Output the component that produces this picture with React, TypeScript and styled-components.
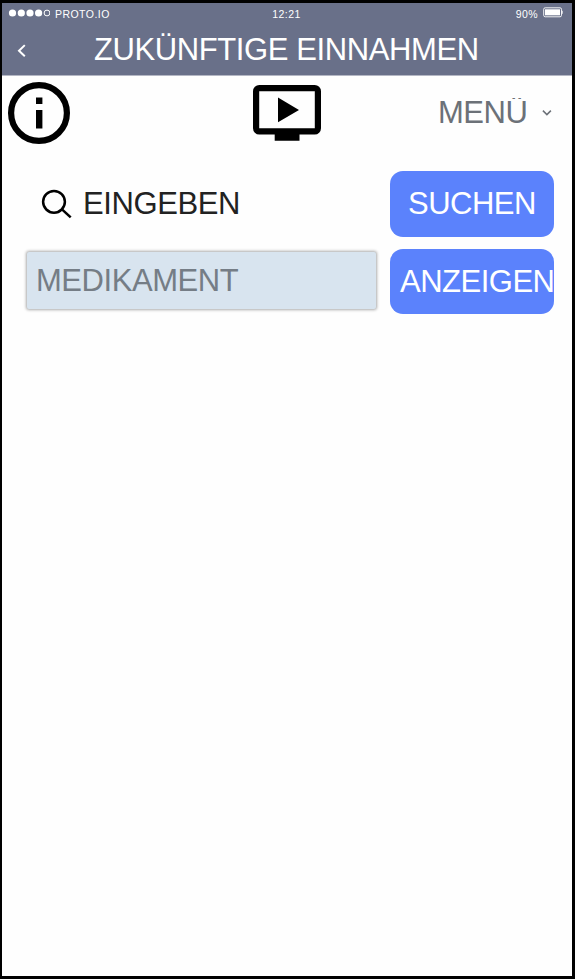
import React from "react";
import styled, { createGlobalStyle } from "styled-components";

const GlobalStyle = createGlobalStyle`
  *, *::before, *::after { box-sizing: border-box; }
  body { margin: 0; background: #fdfdfd; font-family: "Liberation Sans", Arial, sans-serif; }
  svg { display: block; flex: none; }
`;

const Device = styled.main`
  width: 575px;
  height: 979px;
  border: solid #000;
  border-width: 3px 3px 3px 2px;
  background: #fefefe;
  overflow: hidden;
`;

const Header = styled.header`
  height: 73px;
  background: #697089;
  border-bottom: 1px solid #b4b7c4;
  color: #fff;
`;

const StatusBar = styled.div`
  display: grid;
  grid-template-columns: 1fr auto 1fr;
  height: 21px;
  padding: 0 9px 0 6px;
  font: 10.5px/22px "Liberation Sans", Arial, sans-serif;
  letter-spacing: 0.45px;
`;

const StatusGroup = styled.div<{ $end?: boolean }>`
  display: flex;
  gap: 5px;
  justify-content: ${(p) => (p.$end ? "flex-end" : "flex-start")};
  svg { margin-top: ${(p) => (p.$end ? "4px" : "6px")}; }
`;

const Clock = styled.span`
  padding-left: 2px;
`;

const TitleBar = styled.div`
  display: grid;
  grid-template-columns: 92px 1fr;
  height: 51px;
`;

const BackButton = styled.button`
  display: flex;
  align-items: flex-start;
  padding: 20px 0 0 15px;
  border: 0;
  background: none;
  color: inherit;
`;

const Title = styled.h1`
  margin: 0;
  font-size: 31px;
  font-weight: 400;
  line-height: 51px;
  letter-spacing: -0.4px;
  white-space: nowrap;
`;

const Toolbar = styled.nav`
  display: grid;
  grid-template-columns: 251px 185px 1fr;
  height: 92px;
`;

const IconSlot = styled.div<{ $left: number; $top: number }>`
  padding: ${(p) => p.$top}px 0 0 ${(p) => p.$left}px;
`;

const MenuSelect = styled.div`
  display: flex;
  align-items: flex-start;
  gap: 15px;
  color: #6c7178;
  svg { margin-top: 33px; }
`;

const MenuLabel = styled.span`
  height: 30px;
  margin-top: 22px;
  font-size: 31px;
  line-height: 30px;
  letter-spacing: -0.5px;
  overflow: hidden;
`;

const SearchForm = styled.section`
  display: grid;
  grid-template-columns: 351px 164px;
  column-gap: 13px;
  row-gap: 12px;
  padding: 3px 0 0 24px;
`;

const SearchLabel = styled.label`
  display: flex;
  align-items: flex-start;
  gap: 11px;
  padding-left: 15px;
  color: #222;
  font-size: 31px;
  line-height: 65px;
  letter-spacing: -0.4px;
  svg { margin-top: 18px; }
`;

const Field = styled.input`
  width: 349px;
  height: 57px;
  margin: 3px 0 0 1px;
  padding: 0 9px;
  border: 0;
  border-radius: 2px;
  background: #d8e4ef;
  box-shadow: 0 0 3px 1px rgba(0, 0, 0, 0.33);
  font: 31px "Liberation Sans", Arial, sans-serif;
  letter-spacing: -0.45px;
  outline: none;
  &::placeholder { color: #757d86; opacity: 1; }
`;

const Action = styled.button<{ $height: number; $inset: number }>`
  width: 164px;
  height: ${(p) => p.$height}px;
  padding: 0 0 ${(p) => p.$height - 65}px ${(p) => p.$inset}px;
  border: 0;
  border-radius: 13px;
  background: #5b82fc;
  color: #fff;
  font: 31px/65px "Liberation Sans", Arial, sans-serif;
  letter-spacing: -0.5px;
  text-align: left;
  white-space: nowrap;
`;

const SignalIcon = () => (
  <svg width="42" height="8" viewBox="0 0 42 8" fill="#fff">
    {[4.5, 13.3, 22, 30.6].map((x) => (
      <circle key={x} cx={x} cy="4" r="3.6" />
    ))}
    <circle cx="39" cy="4" r="2.9" fill="none" stroke="#fff" strokeWidth="1" />
  </svg>
);

const BatteryIcon = () => (
  <svg width="20" height="11" viewBox="0 0 20 11">
    <rect x="0.7" y="0.8" width="17.8" height="9" rx="1.5" fill="none" stroke="#fff" strokeWidth="0.9" />
    <rect x="2" y="2.3" width="15" height="6" fill="#fff" />
    <path d="M19.3 3.8v3" stroke="#fff" strokeWidth="0.8" />
  </svg>
);

const BackIcon = () => (
  <svg width="10" height="14" viewBox="0 0 10 14" fill="none" stroke="#fff" strokeWidth="2">
    <path d="M7.8 1.1 2 6.7l5.8 5.6" />
  </svg>
);

const InfoIcon = () => (
  <svg width="64" height="64" viewBox="0 0 64 64">
    <circle cx="32" cy="32" r="27.9" fill="none" stroke="#000" strokeWidth="6.2" />
    <path d="M29 16.5h6.4v6.4H29zM29 29h6.4v18.5H29z" />
  </svg>
);

const VideoIcon = () => (
  <svg width="68" height="56" viewBox="0 0 68 56">
    <rect x="3.1" y="3.1" width="61.8" height="43.3" rx="3.2" fill="none" stroke="#000" strokeWidth="6.2" />
    <path d="M21.7 48h24.8v7.7H21.7zM25 12.6v24.6l21-12.3z" />
  </svg>
);

const ChevronIcon = () => (
  <svg width="10" height="8" viewBox="0 0 10 8" fill="none" stroke="#6c7178" strokeWidth="1.5">
    <path d="m.9 1.6 4 4 4-4" />
  </svg>
);

const SearchIcon = () => (
  <svg width="31" height="31" viewBox="0 0 31 31" fill="none" stroke="#000" strokeWidth="2.5">
    <circle cx="13" cy="12.8" r="10.9" />
    <path d="m20.7 20.1 9 8.3" />
  </svg>
);

export default function App() {
  return (
    <>
      <GlobalStyle />
      <Device>
        <Header>
          <StatusBar>
            <StatusGroup><SignalIcon /><span>PROTO.IO</span></StatusGroup>
            <Clock>12:21</Clock>
            <StatusGroup $end><span>90%</span><BatteryIcon /></StatusGroup>
          </StatusBar>
          <TitleBar>
            <BackButton aria-label="Zurück"><BackIcon /></BackButton>
            <Title>ZUKÜNFTIGE EINNAHMEN</Title>
          </TitleBar>
        </Header>
        <Toolbar>
          <IconSlot $left={5} $top={5}><InfoIcon /></IconSlot>
          <IconSlot $left={0} $top={9}><VideoIcon /></IconSlot>
          <MenuSelect><MenuLabel>MENÜ</MenuLabel><ChevronIcon /></MenuSelect>
        </Toolbar>
        <SearchForm>
          <SearchLabel htmlFor="medikament"><SearchIcon />EINGEBEN</SearchLabel>
          <Action $height={66} $inset={18}>SUCHEN</Action>
          <Field id="medikament" placeholder="MEDIKAMENT" />
          <Action $height={65} $inset={10}>ANZEIGEN</Action>
        </SearchForm>
      </Device>
    </>
  );
}
